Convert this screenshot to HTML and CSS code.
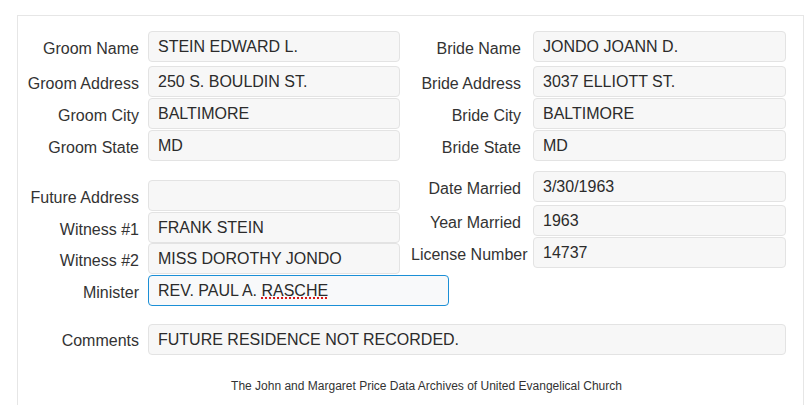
FILE: index.html
```html
<!DOCTYPE html>
<html lang="en">
<head>
  <meta charset="UTF-8" />
  <meta name="viewport" content="width=device-width, initial-scale=1.0" />
  <title>Marriage Record | United Evangelical Church</title>
  <link rel="stylesheet" href="styles.css">
</head>
<body>
  <div class="record">
    <div class="section section-names">
      <div class="column column-left">
        <div class="field"><span class="label">Groom Name</span><div class="value">STEIN EDWARD L.</div></div>
        <div class="field"><span class="label">Groom Address</span><div class="value">250 S. BOULDIN ST.</div></div>
        <div class="field"><span class="label">Groom City</span><div class="value">BALTIMORE</div></div>
        <div class="field"><span class="label">Groom State</span><div class="value">MD</div></div>
      </div>
      <div class="column column-right">
        <div class="field"><span class="label">Bride Name</span><div class="value">JONDO JOANN D.</div></div>
        <div class="field"><span class="label">Bride Address</span><div class="value">3037 ELLIOTT ST.</div></div>
        <div class="field"><span class="label">Bride City</span><div class="value">BALTIMORE</div></div>
        <div class="field"><span class="label">Bride State</span><div class="value">MD</div></div>
      </div>
    </div>

    <div class="section section-details">
      <div class="column column-left column-tight">
        <div class="field"><span class="label">Future Address</span><div class="value"></div></div>
        <div class="field"><span class="label">Witness #1</span><div class="value">FRANK STEIN</div></div>
        <div class="field"><span class="label">Witness #2</span><div class="value">MISS DOROTHY JONDO</div></div>
        <div class="field"><span class="label">Minister</span><div class="value value-wide is-focused">REV. PAUL A. <span class="misspelled">RASCHE</span></div></div>
      </div>
      <div class="column column-right">
        <div class="field"><span class="label">Date Married</span><div class="value">3/30/1963</div></div>
        <div class="field"><span class="label">Year Married</span><div class="value">1963</div></div>
        <div class="field"><span class="label">License Number</span><div class="value">14737</div></div>
      </div>
    </div>

    <div class="field field-comments">
      <span class="label">Comments</span>
      <div class="value value-full">FUTURE RESIDENCE NOT RECORDED.</div>
    </div>

    <footer>The John and Margaret Price Data Archives of United Evangelical Church</footer>
  </div>
</body>
</html>
```

FILE: styles.css
```css
* { box-sizing: border-box; margin: 0; padding: 0; }

html, body {
  height: 100%;
  background: #fff;
  color: #333;
  font-family: 'Liberation Sans', Arial, sans-serif;
  overflow: hidden;
}

.record {
  margin: 15px 0 0 17px;
  width: 787px;
  border: 1px solid #e6e6e6;
  border-bottom: none;
  padding: 15px 0 40px;
}

.section {
  display: flex;
  align-items: flex-start;
}

.column-left {
  width: 382px;
  flex-shrink: 0;
}

.column-right {
  margin-left: 11px;
}

.field {
  display: flex;
  align-items: flex-start;
}

.column > .field + .field { margin-top: 1px; }
.column > .field:first-child { margin-bottom: 4px; }
.section-details .column-right > .field:first-child { margin-bottom: 3px; }
.column-tight > .field:first-child { margin-bottom: 0; }
.column-tight > .field + .field { margin-top: 0.5px; }

.label {
  flex-shrink: 0;
  height: 31px;
  padding-top: 4px;
  font-size: 16px;
  line-height: 27px;
  text-align: right;
  white-space: nowrap;
  color: #333;
}

.column-left .label,
.field-comments .label {
  width: 121px;
  margin-right: 9px;
}

.column-right .label {
  width: 110px;
  margin-right: 12px;
}

.value {
  flex-shrink: 0;
  width: 252px;
  height: 31px;
  padding: 0 9px;
  border: 1px solid #e3e3e3;
  border-radius: 4px;
  background: #f7f7f7;
  font-size: 16px;
  line-height: 29px;
  color: #2b2b2b;
  white-space: nowrap;
}

.column-right .value { width: 253px; }

.value-wide { width: 301px; }

.value.is-focused {
  border-color: #1b8fd6;
  background: #f8f9fa;
}

.misspelled {
  text-decoration: underline dotted #d81818;
  text-decoration-thickness: 2px;
  text-underline-offset: 2px;
}

.section-details { margin-top: 10px; }
.section-details .column-left { margin-top: 9px; }

.field-comments { margin-top: 18.5px; }
.field-comments .label { padding-top: 3px; }
.value-full { width: 638px; }

footer {
  margin-top: 23px;
  padding-left: 32px;
  font-size: 12px;
  line-height: 16px;
  text-align: center;
  color: #333;
}
```
